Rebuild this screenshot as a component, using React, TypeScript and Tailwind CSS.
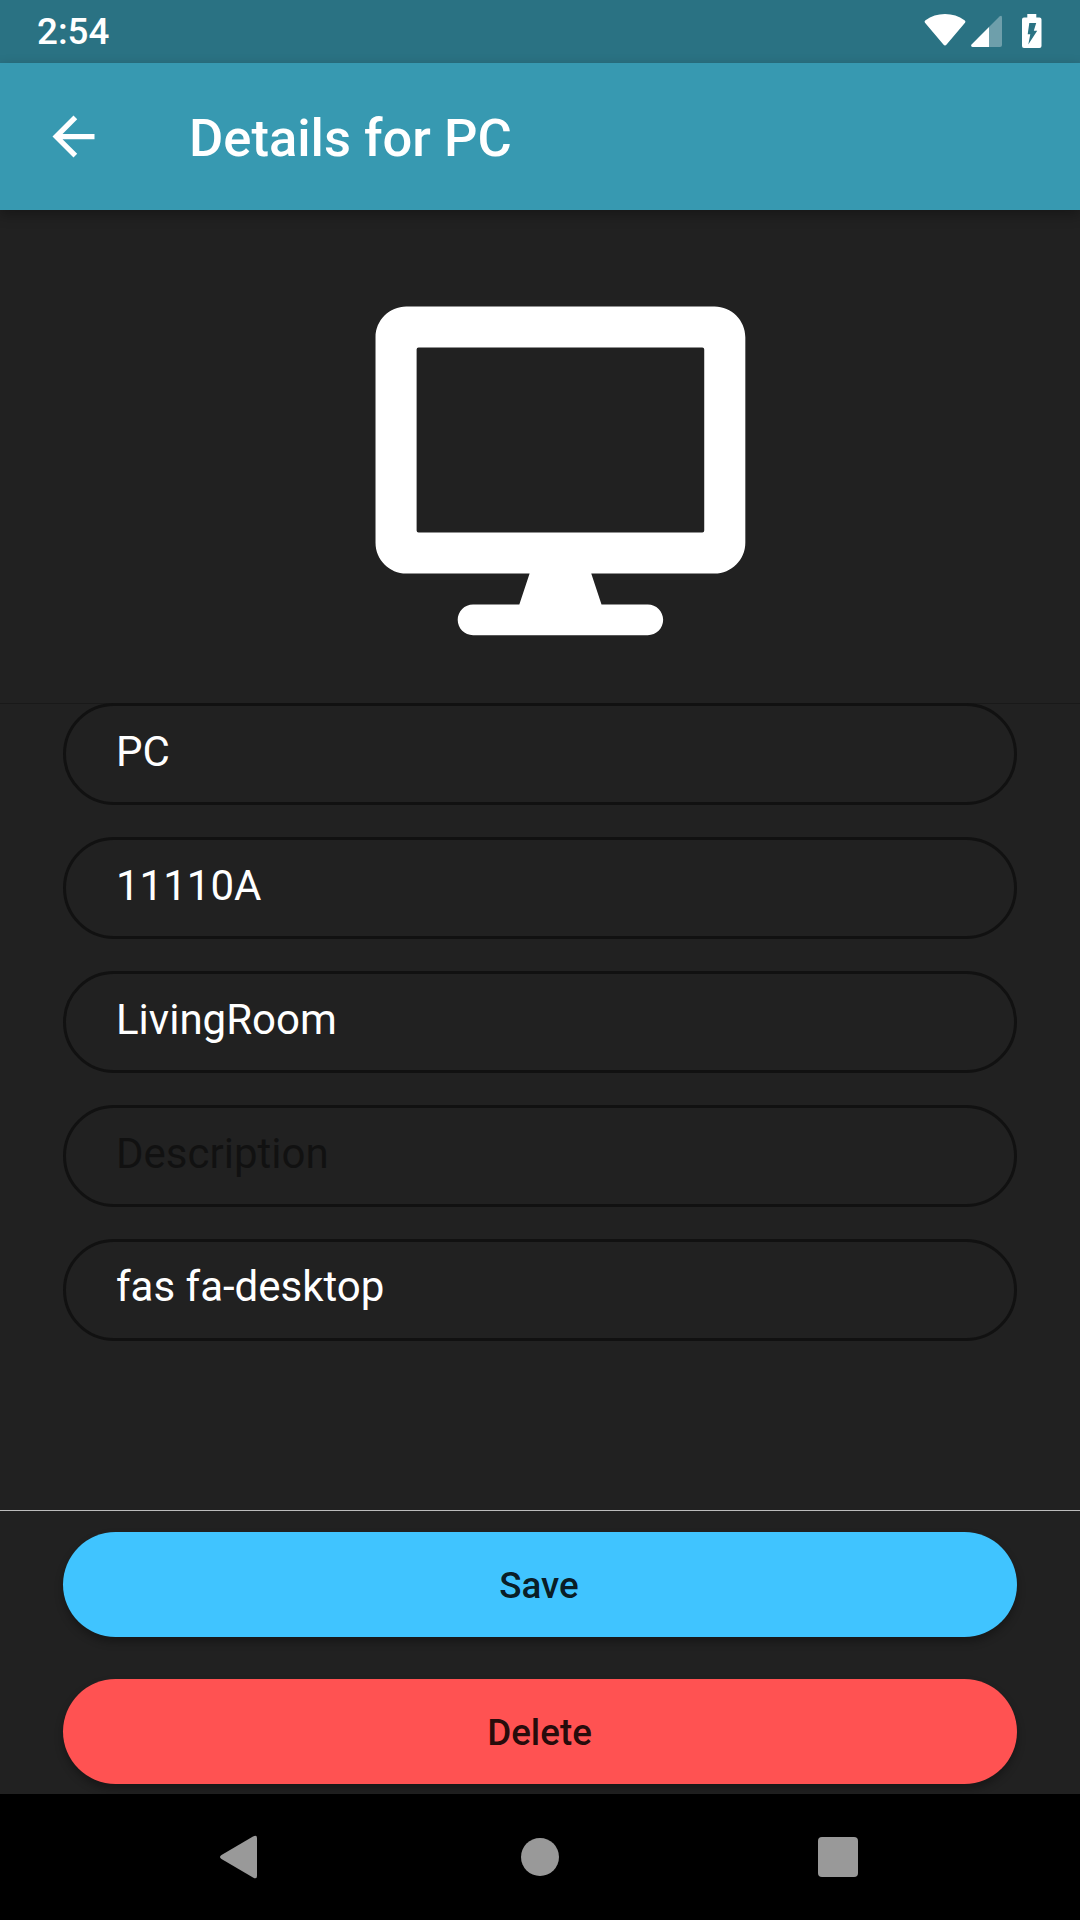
const fields = [
  { value: "PC", placeholder: false },
  { value: "11110A", placeholder: false },
  { value: "LivingRoom", placeholder: false },
  { value: "Description", placeholder: true },
  { value: "fas fa-desktop", placeholder: false },
];

function StatusBar() {
  return (
    <div className="flex h-[63px] shrink-0 items-start justify-between bg-[#2a7283] pl-[37px] pr-[38px] text-white">
      <span className="mt-[10px] text-[36.75px] leading-[44px] font-medium">2:54</span>
      <div className="mt-[14px] flex items-start">
        <svg className="h-[32px] w-[42px]" viewBox="0 0 42 33" preserveAspectRatio="none" fill="currentColor">
          <path d="M1.200 9.200Q-.2 7.800 1.500 6.500Q10 0 21 0T40.500 6.500Q42.200 7.800 40.800 9.200L22.600 31.500Q21 33.500 19.400 31.500Z" />
        </svg>
        <svg className="mt-px ml-[5px] h-[32px] w-[31px]" viewBox="0 0 31 32" fill="currentColor">
          <path d="M28.500 1.500Q31-.5 31 2.500V30Q31 32 29 32H18V12Z" opacity="0.32" />
          <path d="M18 12V32H1.500Q-1 31.500.8 29.200Z" />
        </svg>
        <svg className="ml-5 h-[34px] w-[20px]" viewBox="0 0 20 34">
          <path d="M5.300 0h9v3.500H17.500a2 2 0 0 1 2 2V32a2 2 0 0 1-2 2H2a2 2 0 0 1-2-2V5.500a2 2 0 0 1 2-2h3.300Z" fill="white" />
          <path d="M7.300 9h6.900l-2.400 7.800H15.200L6.300 30.500l2-10.300H5.700Z" fill="#2a7283" />
        </svg>
      </div>
    </div>
  );
}

function AppBar() {
  return (
    <header className="z-10 flex h-[147px] shrink-0 items-center bg-[#3799b1] pl-[42px] text-white shadow-[0_5px_12px_rgba(0,0,0,0.3)]">
      <svg className="h-[63px] w-[63px]" viewBox="0 0 24 24" fill="currentColor">
        <path d="M20 11H7.830l5.590-5.590L12 4l-8 8 8 8 1.410-1.410L7.830 13H20v-2z" />
      </svg>
      <h1 className="ml-[84px] pt-[2px] text-[52.5px] leading-[62px] font-medium">Details for PC</h1>
    </header>
  );
}

function DesktopIcon() {
  return (
    <svg className="ml-[42px] h-[330px] w-[372px]" viewBox="-0.8 -0.8 579.4 514" fill="white" fillRule="evenodd">
      <path d="M528 0H48C21.500 0 0 21.500 0 48v320c0 26.500 21.500 48 48 48h192l-16 48h-72c-13.300 0-24 10.700-24 24s10.700 24 24 24h272c13.300 0 24-10.700 24-24s-10.700-24-24-24h-72l-16-48h192c26.500 0 48-21.500 48-48V48c0-26.500-21.500-48-48-48zM509 352H67a3 3 0 0 1-3-3V67a3 3 0 0 1 3-3h442a3 3 0 0 1 3 3v282a3 3 0 0 1-3 3z" />
    </svg>
  );
}

function NavBar() {
  return (
    <nav className="flex h-[126px] shrink-0 items-center justify-between bg-black pr-[222px] pl-[219px]">
      <svg className="h-[44px] w-[39px]" viewBox="0 0 39 44" fill="#999999">
        <path d="M34 1.500Q38 -.8 38 3V41Q38 44.800 34 42.500L2.500 24Q-.5 22 2.500 20Z" />
      </svg>
      <div className="ml-[4px] h-[38px] w-[38px] rounded-full bg-[#999999]" />
      <div className="h-[40px] w-[40px] rounded-[4px] bg-[#999999]" />
    </nav>
  );
}

export default function App() {
  return (
    <div className="flex h-[1920px] w-[1080px] flex-col overflow-hidden bg-[#212121] font-['Roboto',sans-serif]">
      <StatusBar />
      <AppBar />
      <section className="flex h-[494px] shrink-0 justify-center border-b border-[#191919] pt-24">
        <DesktopIcon />
      </section>
      <main className="mt-[-1px] flex h-[807px] shrink-0 flex-col gap-8 px-[63px]">
        {fields.map((field) => (
          <div
            key={field.value}
            className="flex h-[102px] shrink-0 items-start rounded-full border-[3px] border-[#111111] pl-[50px] pt-[21px] text-[42px] leading-[49px] last:pt-5"
          >
            <span className={field.placeholder ? "text-[#111111]" : "text-white"}>{field.value}</span>
          </div>
        ))}
      </main>
      <footer className="flex h-[284px] shrink-0 flex-col gap-[42px] border-t border-[#bdbdbd] px-[63px] pt-[21px]">
        <button className="h-[105px] shrink-0 rounded-full bg-[#40c4ff] pt-[2px] pr-[2px] text-[36.75px] font-medium text-black/87 shadow-[0_5px_8px_rgba(0,0,0,0.3)]">
          Save
        </button>
        <button className="h-[105px] shrink-0 rounded-full bg-[#ff5252] pt-[2px] pr-px text-[36.75px] font-medium text-black/87 shadow-[0_5px_8px_rgba(0,0,0,0.3)]">
          Delete
        </button>
      </footer>
      <NavBar />
    </div>
  );
}
